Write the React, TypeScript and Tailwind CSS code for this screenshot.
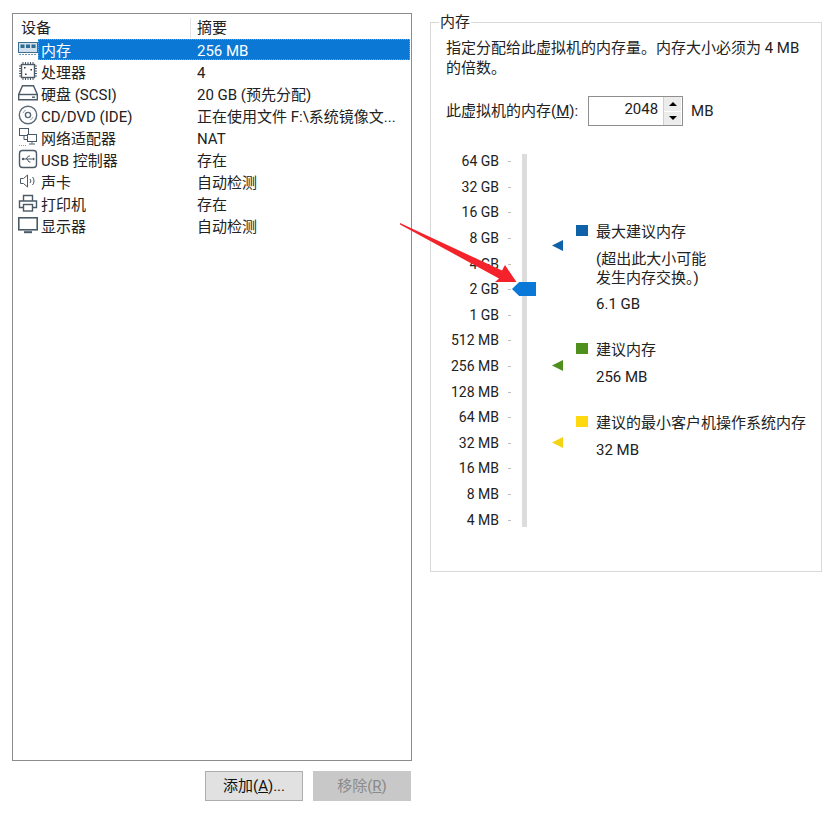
const font = "font-['Roboto','Noto_Sans_CJK_SC',sans-serif]"

function MemoryIcon() {
	return (
		<svg width="20" height="16" viewBox="0 0 20 16" fill="none">
			<rect x="0.5" y="1.5" width="19" height="10" fill="#cfe0ec" stroke="#3f6f8f" />
			<rect x="2.5" y="3.500" width="4" height="3.500" fill="#2f6a94" />
			<rect x="8" y="3.500" width="4" height="3.500" fill="#2f6a94" />
			<rect x="13.5" y="3.500" width="4" height="3.500" fill="#2f6a94" />
			<path d="M1 13.500h18" stroke="#6f93ab" strokeDasharray="2 1" />
		</svg>
	)
}

function CpuIcon() {
	return (
		<svg width="20" height="20" viewBox="0 0 20 20" fill="none" stroke="#4a5a66">
			<rect x="3.500" y="3.500" width="13" height="13" strokeWidth="1.400" />
			<path d="M5 1v2M7.500 1v2M10 1v2M12.500 1v2M15 1v2M5 17v2M7.500 17v2M10 17v2M12.500 17v2M15 17v2M1 5h2M1 7.500h2M1 10h2M1 12.500h2M1 15h2M17 5h2M17 7.500h2M17 10h2M17 12.500h2M17 15h2" />
			<rect x="6" y="6" width="1.500" height="1.500" fill="#333" stroke="none" />
			<rect x="12.500" y="8" width="1.500" height="1.500" fill="#333" stroke="none" />
			<rect x="7" y="12.500" width="1.500" height="1.500" fill="#333" stroke="none" />
		</svg>
	)
}

function DiskIcon() {
	return (
		<svg width="20" height="18" viewBox="0 0 20 18" fill="none" stroke="#4a5a66" strokeWidth="1.400">
			<path d="M4.500 1.700h11l3.800 8.800v5.300H.7v-5.300z" />
			<path d="M.7 10.500h18.600" />
			<path d="M14 13.200h3" />
		</svg>
	)
}

function DvdIcon() {
	return (
		<svg width="20" height="20" viewBox="0 0 20 20" fill="none" stroke="#5c6a74">
			<circle cx="10" cy="10" r="8.700" strokeWidth="1.400" />
			<circle cx="10" cy="10" r="2.600" strokeWidth="1.400" />
			<path d="M5 8a5.500 5.500 0 0 1 3-3M12 15a5.500 5.500 0 0 0 3-3" stroke="#9aa5ad" />
		</svg>
	)
}

function NetworkIcon() {
	return (
		<svg width="20" height="20" viewBox="0 0 20 20" fill="none" stroke="#4a5a66">
			<rect x="1.500" y="1.500" width="9" height="7" />
			<rect x="9.500" y="7.500" width="9" height="7" fill="#fff" />
			<path d="M14 14.500v2M11 17h6M6 8.500v4H9" />
			<path d="M1 18.500h8" strokeDasharray="1 1" stroke="#8f9ba3" />
		</svg>
	)
}

function UsbIcon() {
	return (
		<svg width="20" height="20" viewBox="0 0 20 20" fill="none" stroke="#4a5a66">
			<rect x="1.500" y="1.500" width="17" height="17" rx="3" strokeWidth="1.400" />
			<path d="M5 10h10M8 10l2.500-3H12M9 10l2 3h1.500" />
			<path d="M15 8.500l2 1.500-2 1.500z" fill="#4a5a66" stroke="none" />
			<circle cx="5" cy="10" r="1.200" fill="#4a5a66" stroke="none" />
		</svg>
	)
}

function SoundIcon() {
	return (
		<svg width="20" height="18" viewBox="0 0 20 18" fill="none" stroke="#4a5a66">
			<path d="M2.500 6.500h3l4-3.500v12l-4-3.500h-3z" />
			<path d="M12 7a3 3 0 0 1 0 4M14.500 5a6 6 0 0 1 0 8" />
		</svg>
	)
}

function PrinterIcon() {
	return (
		<svg width="20" height="20" viewBox="0 0 20 20" fill="none" stroke="#4a5a66" strokeWidth="1.400">
			<path d="M5.500 8V2.500h9V8" />
			<path d="M5 14.500H1.500V8h17v6.500H15" />
			<rect x="5.500" y="11.500" width="9" height="6.500" />
		</svg>
	)
}

function DisplayIcon() {
	return (
		<svg width="20" height="18" viewBox="0 0 20 18" fill="none" stroke="#4a5a66" strokeWidth="1.600">
			<rect x="0.800" y="1.800" width="18.400" height="12" />
			<path d="M6 16.200h8" strokeWidth="2" />
		</svg>
	)
}

const devices = [
	{ name: "内存", summary: "256 MB", icon: <MemoryIcon />, selected: true },
	{ name: "处理器", summary: "4", icon: <CpuIcon /> },
	{ name: "硬盘 (SCSI)", summary: "20 GB (预先分配)", icon: <DiskIcon /> },
	{ name: "CD/DVD (IDE)", summary: "正在使用文件 F:\\系统镜像文...", icon: <DvdIcon /> },
	{ name: "网络适配器", summary: "NAT", icon: <NetworkIcon /> },
	{ name: "USB 控制器", summary: "存在", icon: <UsbIcon /> },
	{ name: "声卡", summary: "自动检测", icon: <SoundIcon /> },
	{ name: "打印机", summary: "存在", icon: <PrinterIcon /> },
	{ name: "显示器", summary: "自动检测", icon: <DisplayIcon /> },
]

const scale = ["64 GB", "32 GB", "16 GB", "8 GB", "4 GB", "2 GB", "1 GB", "512 MB", "256 MB", "128 MB", "64 MB", "32 MB", "16 MB", "8 MB", "4 MB"]

function DeviceList() {
	return (
		<div className="w-[400px] shrink-0">
			<div className="h-[748px] border border-[#8c8c8c] bg-white">
				<div className="flex h-[24px] items-center pt-[4px]">
					<div className="w-[178px] border-r border-[#e5e5e5] pl-2 leading-[20px]">设备</div>
					<div className="pl-[6px]">摘要</div>
				</div>
				{devices.map((d) => (
					<div key={d.name} className="flex h-[22px] items-end">
						<div className="flex h-full w-[25px] shrink-0 items-center justify-end">{d.icon}</div>
						<div
							className={
								d.selected
									? "flex h-[21px] flex-1 items-center border border-dotted border-[#5fa8e6] bg-[#0b78d6] pt-[3px] text-white"
									: "flex h-[21px] flex-1 items-center border border-transparent pt-[3px]"
							}>
							<span className="w-[158px] shrink-0 pl-[2px]">{d.name}</span>
							<span className="whitespace-nowrap">{d.summary}</span>
						</div>
						<div className="w-px" />
					</div>
				))}
			</div>
			<div className="mr-px mt-[10px] flex justify-end gap-[10px]">
				<button className="h-[30px] w-[98px] border border-[#adadad] bg-[#e1e1e1] text-[#111]">
					添加(<span className="underline">A</span>)...
				</button>
				<button className="h-[30px] w-[98px] bg-[#c8c8c8] text-[#8a8a8a]">
					移除(<span className="underline">R</span>)
				</button>
			</div>
		</div>
	)
}

function MemorySlider() {
	return (
		<div className="relative mt-[28px] flex h-[373px]">
			<div className="-mt-[5px] flex w-[65px] flex-col text-[14px]">
				{scale.map((s) => (
					<div key={s} className="flex h-[25.6px] shrink-0 items-center justify-end gap-[9px] whitespace-nowrap">
						<span>{s}</span>
						<span className="h-px w-[3px] bg-[#bdbdbd]" />
					</div>
				))}
			</div>
			<div className="ml-[11px] h-full w-[5px] bg-[#dcdcdc]" />
			<div className="absolute left-[66px] top-[128px] h-[14px] w-[24px] bg-[#0a78d7] [clip-path:polygon(0_50%,30%_0,100%_0,100%_100%,30%_100%)]" />
			<div className="absolute left-[106px] top-[86px] h-[11px] w-[11px] bg-[#0f62a8] [clip-path:polygon(0_50%,100%_0,100%_100%)]" />
			<div className="absolute left-[106px] top-[206px] h-[11px] w-[11px] bg-[#4e8f1e] [clip-path:polygon(0_50%,100%_0,100%_100%)]" />
			<div className="absolute left-[106px] top-[283px] h-[11px] w-[11px] bg-[#f3d313] [clip-path:polygon(0_50%,100%_0,100%_100%)]" />
			<div className="ml-[49px] mt-[66px] flex flex-col">
				<div className="flex gap-[8px]">
					<span className="mt-[5px] h-[11px] w-[12px] bg-[#0f62a8]" />
					<div className="pt-[2px] leading-[20px]">
						<div>最大建议内存</div>
						<div className="mt-[8px] leading-[19px]">(超出此大小可能</div>
						<div className="leading-[19px]">发生内存交换。)</div>
						<div className="mt-[6px]">6.1 GB</div>
					</div>
				</div>
				<div className="mt-[24px] flex gap-[8px]">
					<span className="mt-[5px] h-[11px] w-[12px] bg-[#4e8f1e]" />
					<div className="pt-[2px] leading-[20px]">
						<div>建议内存</div>
						<div className="mt-[7px]">256 MB</div>
					</div>
				</div>
				<div className="mt-[24px] flex gap-[8px]">
					<span className="mt-[5px] h-[11px] w-[12px] bg-[#ffd90f]" />
					<div className="pt-[2px] leading-[20px]">
						<div className="whitespace-nowrap">建议的最小客户机操作系统内存</div>
						<div className="mt-[7px]">32 MB</div>
					</div>
				</div>
			</div>
		</div>
	)
}

function MemoryPanel() {
	return (
		<fieldset className="ml-[18px] h-[559px] w-[392px] border border-[#d9d9d9] px-[15px]">
			<legend className="-ml-[7px] px-[1px] leading-[18px]">内存</legend>
			<p className="mt-[7px] whitespace-nowrap leading-[20px]">
				指定分配给此虚拟机的内存量。内存大小必须为 4 MB
				<br />
				的倍数。
			</p>
			<div className="mt-[18px] flex h-[30px] items-center">
				<span className="whitespace-nowrap">
					此虚拟机的内存(<span className="underline">M</span>):
				</span>
				<div className="ml-[10px] flex h-[30px] w-[95px] items-center border border-[#8e8e8e] pr-[1px]">
					<span className="mb-[3px] flex-1 pr-[5px] text-right">2048</span>
					<div className="flex h-full w-[18px] flex-col gap-px border-l border-[#cfcfcf]">
						<div className="flex flex-1 items-center justify-center bg-[#ececec]">
							<span className="h-0 w-0 border-x-[4px] border-b-[4px] border-x-transparent border-b-black" />
						</div>
						<div className="flex flex-1 items-center justify-center bg-[#ececec]">
							<span className="h-0 w-0 border-x-[4px] border-t-[4px] border-x-transparent border-t-black" />
						</div>
					</div>
				</div>
				<span className="ml-[8px]">MB</span>
			</div>
			<MemorySlider />
		</fieldset>
	)
}

export default function App() {
	return (
		<div className={`relative flex h-[814px] w-[834px] overflow-hidden bg-white pl-[12px] pt-[13px] text-[15px] text-[#222] ${font}`}>
			<DeviceList />
			<MemoryPanel />
			<svg className="pointer-events-none absolute left-0 top-0" width="834" height="814" viewBox="0 0 834 814">
				<polygon points="400,223 502,270.500 505,265 516.500,282 495,282 499,278.500 400,224.500" fill="#f4232b" />
			</svg>
		</div>
	)
}
